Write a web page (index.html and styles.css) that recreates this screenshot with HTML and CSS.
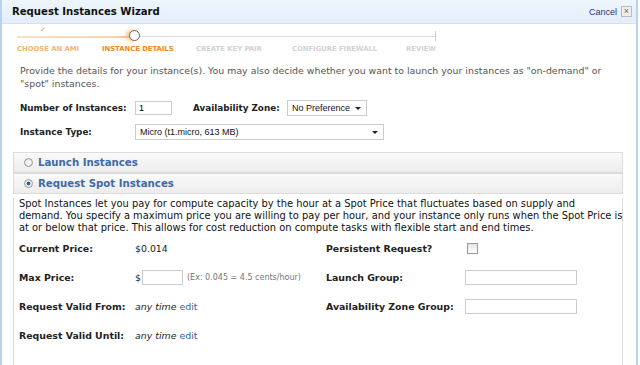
FILE: index.html
```html
<!DOCTYPE html>
<html lang="en">
<head>
<meta charset="UTF-8">
<title>Request Instances Wizard</title>
<link rel="stylesheet" href="styles.css">
</head>
<body>

<div class="wizard">
    <div class="titlebar">
        <h1>Request Instances Wizard</h1>
        <div class="cancel"><a href="#">Cancel</a><span class="close">&#215;</span></div>
    </div>

    <div class="steps">
        <div class="track">
            <div class="done"></div>
            <span class="check">&#10003;</span>
            <span class="dot"></span>
            <span class="end"></span>
        </div>
        <div class="labels">
            <span class="past">CHOOSE AN AMI</span>
            <span class="current">INSTANCE DETAILS</span>
            <span>CREATE KEY PAIR</span>
            <span>CONFIGURE FIREWALL</span>
            <span>REVIEW</span>
        </div>
    </div>

    <p class="intro">Provide the details for your instance(s). You may also decide whether you want to launch your instances as "on-demand" or "spot" instances.</p>

    <div class="fields">
        <div class="row">
            <label for="count">Number of Instances:</label>
            <input type="text" id="count" class="small" value="1">
            <label for="zone" class="zone-label">Availability Zone:</label>
            <div class="select zone">No Preference <span class="arrow"></span></div>
        </div>
        <div class="row">
            <label>Instance Type:</label>
            <div class="select type">Micro (t1.micro, 613 MB) <span class="arrow"></span></div>
        </div>
    </div>

    <div class="section">
        <div class="section-head"><span class="radio"></span>Launch Instances</div>
    </div>
    <div class="section open">
        <div class="section-head"><span class="radio on"></span>Request Spot Instances</div>
        <div class="section-body">
            <p>Spot Instances let you pay for compute capacity by the hour at a Spot Price that fluctuates based on supply and<br>
            demand. You specify a maximum price you are willing to pay per hour, and your instance only runs when the Spot Price is<br>
            at or below that price. This allows for cost reduction on compute tasks with flexible start and end times.</p>
            <div class="spot-grid">
                <div class="col">
                    <div class="line"><label>Current Price:</label><span class="value">$0.014</span></div>
                    <div class="line"><label>Max Price:</label><span class="value">$<input type="text" class="price"><span class="hint">(Ex: 0.045 = 4.5 cents/hour)</span></span></div>
                    <div class="line"><label>Request Valid From:</label><span class="value"><em>any time</em> <a href="#">edit</a></span></div>
                    <div class="line"><label>Request Valid Until:</label><span class="value"><em>any time</em> <a href="#">edit</a></span></div>
                </div>
                <div class="col right">
                    <div class="line"><label>Persistent Request?</label><span class="value"><span class="checkbox"></span></span></div>
                    <div class="line"><label>Launch Group:</label><span class="value"><input type="text" class="wide"></span></div>
                    <div class="line"><label>Availability Zone Group:</label><span class="value"><input type="text" class="wide"></span></div>
                </div>
            </div>
        </div>
    </div>
</div>

</body>
</html>
```

FILE: styles.css
```css
body {
    margin: 0;
    background: #fff;
    font-family: "DejaVu Sans", Verdana, sans-serif;
    color: #222;
}
.wizard {
    height: 365px;
    width: 634px;
    border-left: 2px solid #b7d3f0;
    border-right: 2px solid #b7d3f0;
    overflow: hidden;
}
.titlebar {
    display: flex;
    justify-content: space-between;
    align-items: center;
    height: 23px;
    padding: 0 4px 0 10px;
    background: linear-gradient(#eef5fd, #e3eefb);
    border-bottom: 1px solid #d3e2f3;
}
h1 {
    margin: 0;
    font-size: 10.1px;
    font-weight: bold;
    color: #111;
}
.cancel {
    display: flex;
    align-items: center;
    gap: 4px;
    font-family: "Liberation Sans", Arial, sans-serif;
    font-size: 9px;
}
.cancel a {
    color: #333377;
    text-decoration: none;
}
.close {
    display: inline-block;
    width: 9px;
    height: 9px;
    line-height: 9px;
    text-align: center;
    font-size: 9px;
    color: #666;
    background: #eee;
    border: 1px solid #bbb;
}
.steps {
    padding: 8px 0 0 15px;
    height: 30px;
}
.track {
    position: relative;
    width: 419px;
    height: 1px;
    margin-top: 5px;
    background: #dcdcdc;
}
.track .done {
    width: 116px;
    height: 2px;
    margin-top: -1px;
    background: linear-gradient(to right, #f8e0c8, #f7d4b0 85%, #f2b16f);
}
.track .check {
    position: absolute;
    left: 23px;
    top: -10px;
    font-size: 7px;
    color: #e8903a;
}
.track .dot {
    position: absolute;
    left: 112px;
    top: -6px;
    width: 9px;
    height: 9px;
    border: 1.5px solid #666;
    border-radius: 50%;
    background: #fff;
    box-shadow: -3px 0 4px #f5c08a;
}
.track .end {
    position: absolute;
    right: 0;
    top: -5px;
    width: 1px;
    height: 10px;
    background: #ccc;
}
.labels {
    display: grid;
    grid-template-columns: 85px 94px 96px 114px auto;
    margin-top: 8px;
    font-size: 6.8px;
    font-weight: bold;
    color: #d2d2d2;
}
.labels .past {
    color: #f0b37a;
}
.labels .current {
    color: #ee8822;
}
.intro {
    margin: 2px 0 0 18px;
    width: 600px;
    font-size: 9.4px;
    line-height: 13px;
    color: #555;
}
.fields {
    margin: 6px 0 0 18px;
}
.row {
    display: flex;
    align-items: center;
    height: 24px;
}
.row label {
    width: 115px;
    white-space: nowrap;
    font-size: 8.8px;
    font-weight: bold;
}
.row .zone-label {
    width: 94px;
    margin-left: 21px;
}
input {
    box-sizing: border-box;
    border: 1px solid #ccc;
    font-family: "Liberation Sans", Arial, sans-serif;
    font-size: 9px;
    padding: 1px 3px;
    outline: none;
}
.small {
    width: 37px;
    height: 14px;
}
.select {
    position: relative;
    box-sizing: border-box;
    height: 16px;
    line-height: 14px;
    padding: 0 4px;
    border: 1px solid #ccc;
    font-family: "Liberation Sans", Arial, sans-serif;
    font-size: 9px;
    color: #111;
}
.zone {
    width: 80px;
}
.type {
    width: 249px;
}
.arrow {
    position: absolute;
    right: 5px;
    top: 6px;
    border-left: 3px solid transparent;
    border-right: 3px solid transparent;
    border-top: 3px solid #222;
}
.section {
    margin: 0 13px 0 11px;
}
.fields + .section {
    margin-top: 8px;
}
.section-head {
    display: flex;
    align-items: center;
    height: 19px;
    padding-left: 10px;
    border: 1px solid #dcdcdc;
    background: linear-gradient(#fafafa, #ececec);
    font-size: 10.2px;
    font-weight: bold;
    color: #3f6aa6;
}
.radio {
    box-sizing: border-box;
    width: 9px;
    height: 9px;
    margin-right: 5px;
    border: 1px solid #999;
    border-radius: 50%;
    background: radial-gradient(#fff, #ddd);
}
.radio.on {
    background: radial-gradient(#2a5f9e 30%, #e8eef5 45%);
}
.section-body {
    height: 169px;
    padding: 0 5px;
    border: 1px solid #dcdcdc;
    border-top: none;
}
.section-body p {
    margin: 4px 0 0;
    white-space: nowrap;
    font-size: 9.9px;
    line-height: 12px;
    color: #111;
}
.spot-grid {
    display: flex;
}
.col {
    flex: none;
    width: 307px;
}
.col.right {
    flex: 1;
}
.line {
    display: flex;
    align-items: center;
    height: 29px;
}
.line label {
    width: 116px;
    font-size: 9.4px;
    font-weight: bold;
}
.right .line label {
    width: 139px;
}
.value {
    display: flex;
    align-items: center;
    font-size: 9.4px;
}
.value em {
    margin-right: 3px;
}
.value a {
    color: #2a5f9e;
    text-decoration: none;
}
.price {
    width: 41px;
    height: 15px;
    margin-left: 1px;
}
.hint {
    margin-left: 4px;
    color: #777;
    font-size: 8px;
}
.checkbox {
    width: 9px;
    height: 9px;
    margin-left: 2px;
    border: 1px solid #999;
    background: linear-gradient(#e5e5e5, #fff);
}
.wide {
    width: 112px;
    height: 15px;
}
```
